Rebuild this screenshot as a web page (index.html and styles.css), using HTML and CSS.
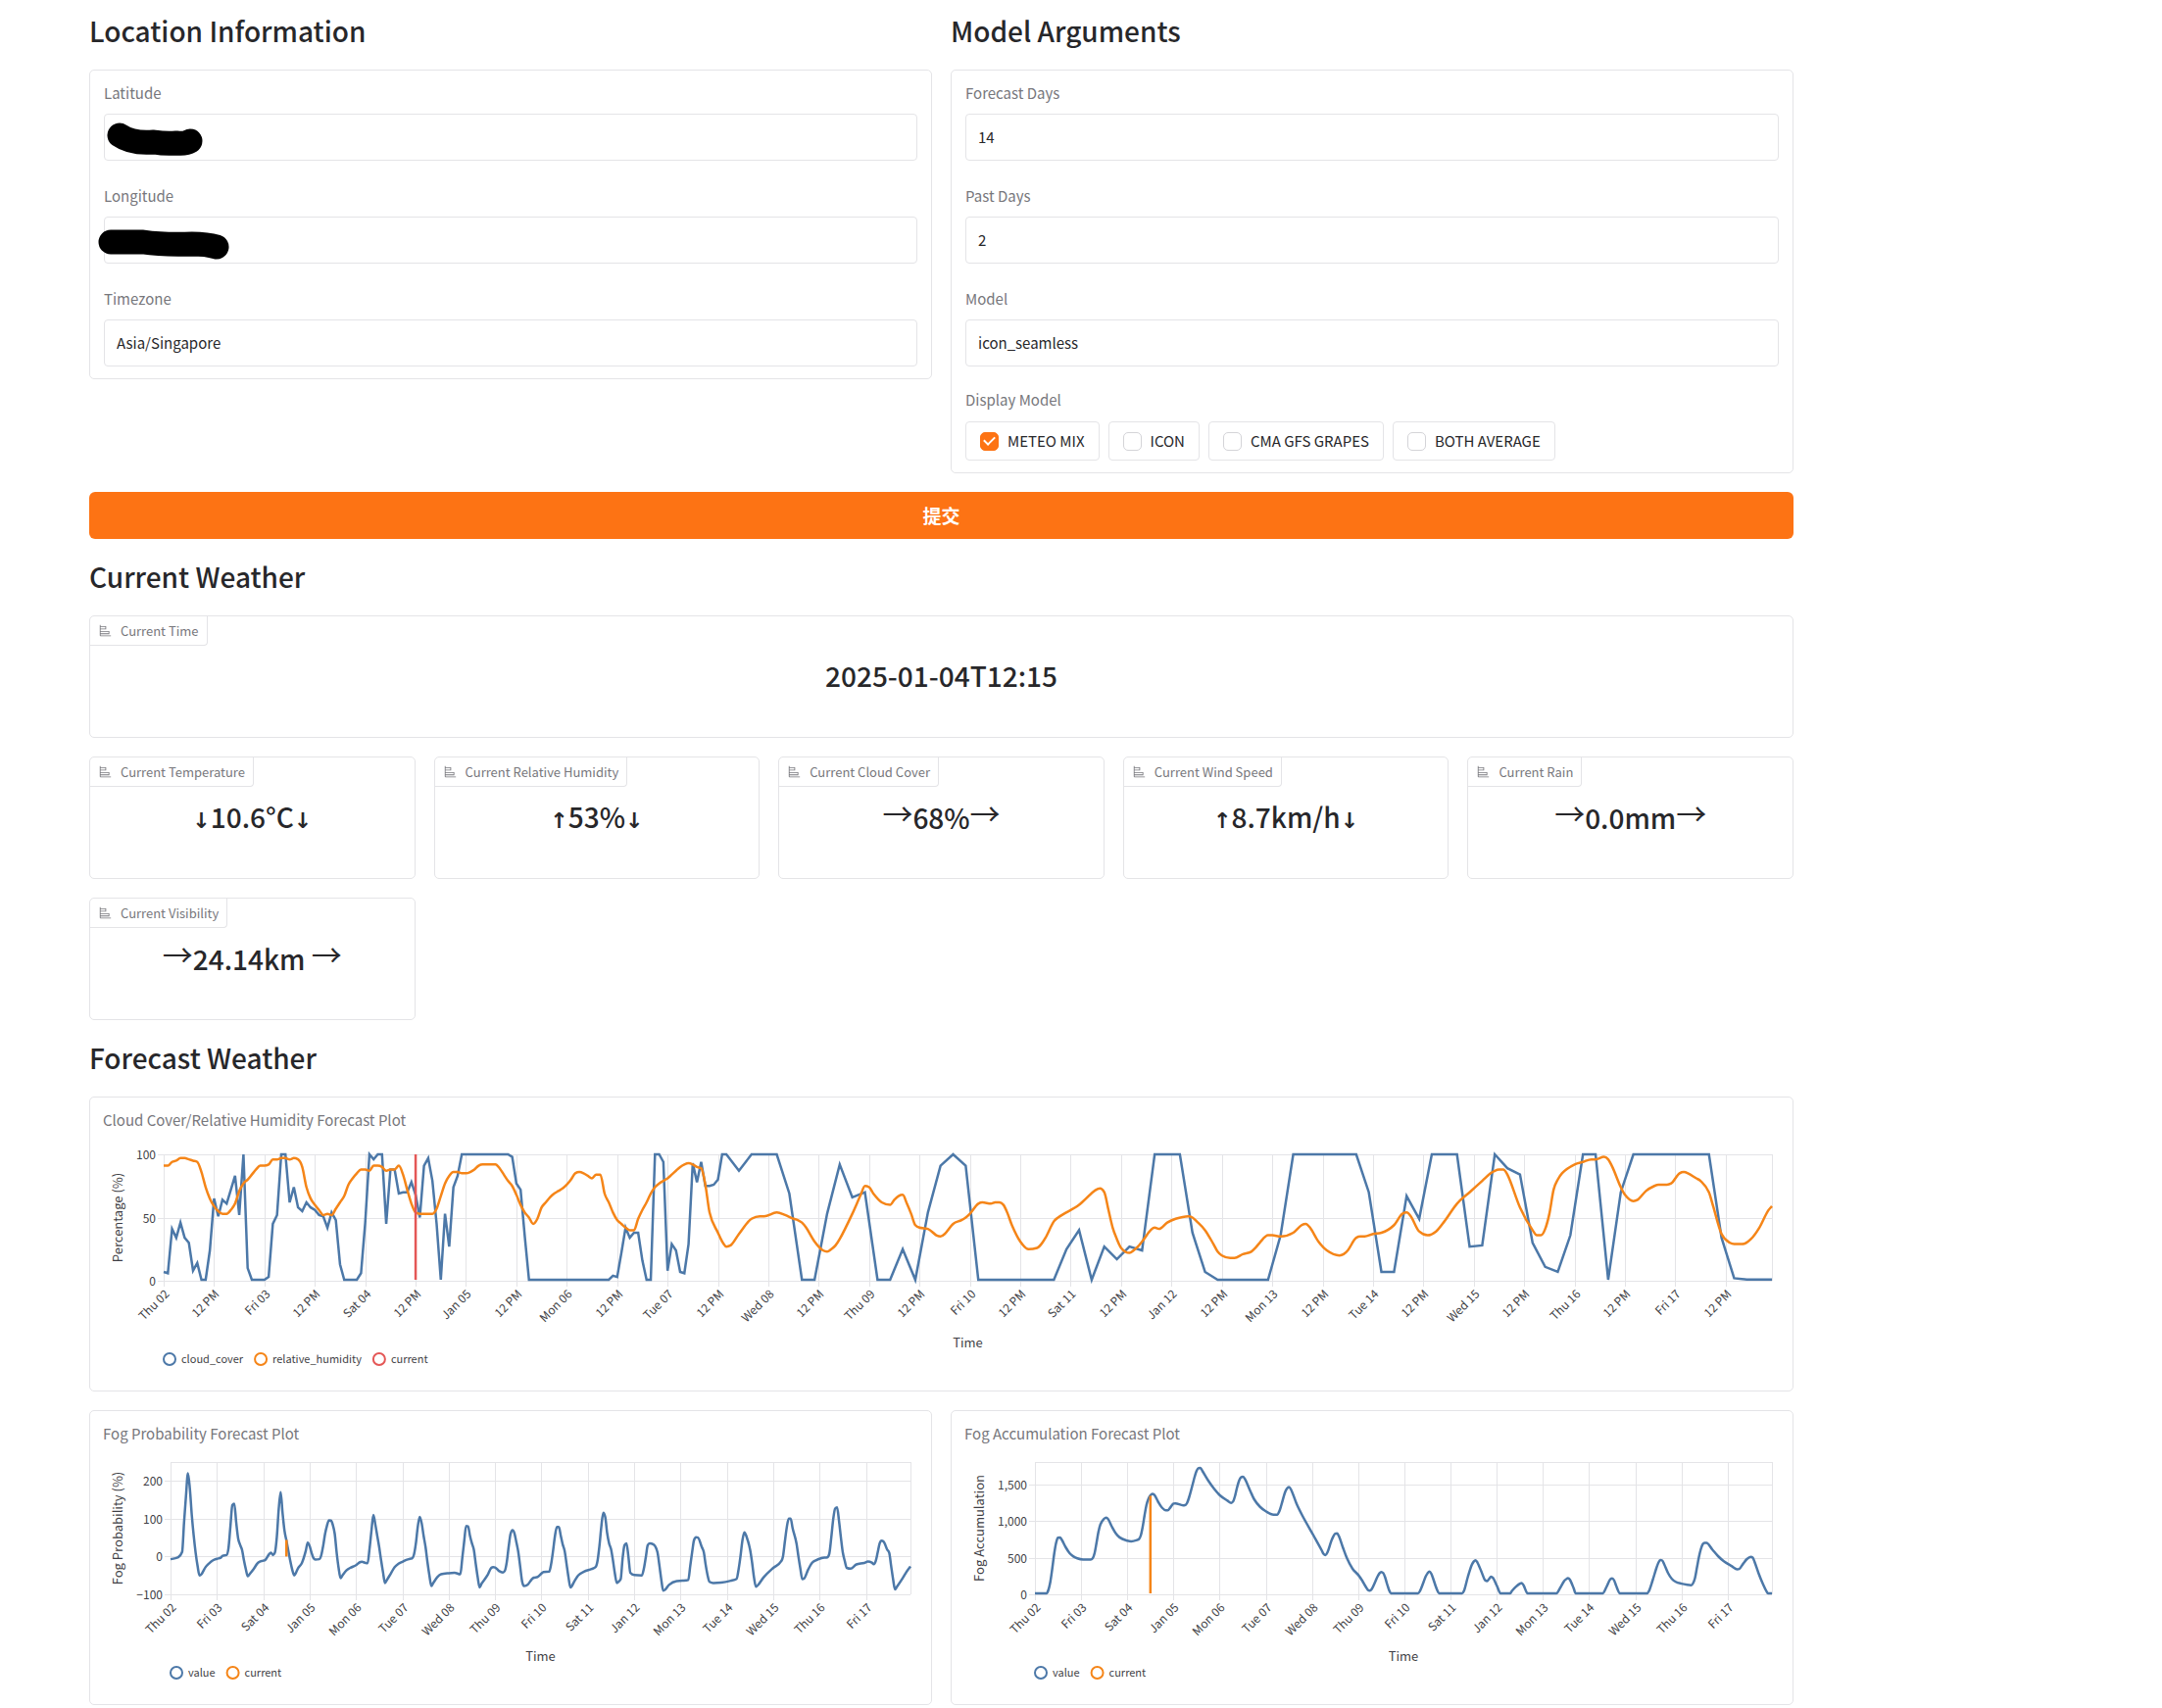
FILE: index.html
```html
<!DOCTYPE html>
<html lang="en">
<head>
<meta charset="utf-8">
<title>Weather Forecast</title>
<link rel="stylesheet" href="styles.css">
</head>
<body>
<svg width="0" height="0" class="sprite" aria-hidden="true">
  <symbol id="bar-icon" viewBox="0 0 32 32"><path fill="currentColor" d="M4 2H2v26a2 2 0 0 0 2 2h26v-2H4v-3h22v-8H4v-4h14V5H4Zm20 17v4H4v-4ZM16 7v4H4V7Z"/></symbol>
</svg>
<main class="page">
  <div class="columns">
    <section class="column">
      <h2 class="heading">Location Information</h2>
      <div class="card form">
        <div class="field">
          <label for="latitude">Latitude</label>
          <div class="control">
            <input id="latitude" type="text">
            <svg class="redaction" width="130" height="48" aria-hidden="true"><path d="M16 22Q29 31 51 29Q63 31 74 30Q83 31 88 28"/></svg>
          </div>
        </div>
        <div class="field">
          <label for="longitude">Longitude</label>
          <div class="control">
            <input id="longitude" type="text">
            <svg class="redaction" width="130" height="48" aria-hidden="true"><path d="M7 26L40 26Q60 29 90 28Q105 28 115 31"/></svg>
          </div>
        </div>
        <div class="field">
          <label for="timezone">Timezone</label>
          <div class="control"><input id="timezone" type="text" value="Asia/Singapore"></div>
        </div>
      </div>
    </section>
    <section class="column">
      <h2 class="heading">Model Arguments</h2>
      <div class="card form">
        <div class="field">
          <label for="forecast-days">Forecast Days</label>
          <div class="control"><input id="forecast-days" type="text" value="14"></div>
        </div>
        <div class="field">
          <label for="past-days">Past Days</label>
          <div class="control"><input id="past-days" type="text" value="2"></div>
        </div>
        <div class="field">
          <label for="model">Model</label>
          <div class="control"><input id="model" type="text" value="icon_seamless"></div>
        </div>
        <fieldset class="choices">
          <legend>Display Model</legend>
          <div class="choice-list">
            <label class="choice"><input type="checkbox" checked>METEO MIX</label>
            <label class="choice"><input type="checkbox">ICON</label>
            <label class="choice"><input type="checkbox">CMA GFS GRAPES</label>
            <label class="choice"><input type="checkbox">BOTH AVERAGE</label>
          </div>
        </fieldset>
      </div>
    </section>
  </div>

  <button class="submit" type="submit" lang="zh">提交</button>

  <h2 class="heading">Current Weather</h2>
  <article class="card stat">
    <h3 class="tab"><svg class="icon"><use href="#bar-icon"/></svg>Current Time</h3>
    <p class="value">2025-01-04T12:15</p>
  </article>
  <div class="stats">
    <article class="card stat">
      <h3 class="tab"><svg class="icon"><use href="#bar-icon"/></svg>Current Temperature</h3>
      <p class="value"><span class="rise">↓</span>10.6°C<span class="rise">↓</span></p>
    </article>
    <article class="card stat">
      <h3 class="tab"><svg class="icon"><use href="#bar-icon"/></svg>Current Relative Humidity</h3>
      <p class="value"><span class="rise">↑</span>53%<span class="rise">↓</span></p>
    </article>
    <article class="card stat">
      <h3 class="tab"><svg class="icon"><use href="#bar-icon"/></svg>Current Cloud Cover</h3>
      <p class="value"><span class="steady">→</span>68%<span class="steady">→</span></p>
    </article>
    <article class="card stat">
      <h3 class="tab"><svg class="icon"><use href="#bar-icon"/></svg>Current Wind Speed</h3>
      <p class="value"><span class="rise">↑</span>8.7km/h<span class="rise">↓</span></p>
    </article>
    <article class="card stat">
      <h3 class="tab"><svg class="icon"><use href="#bar-icon"/></svg>Current Rain</h3>
      <p class="value"><span class="steady">→</span>0.0mm<span class="steady">→</span></p>
    </article>
    <article class="card stat">
      <h3 class="tab"><svg class="icon"><use href="#bar-icon"/></svg>Current Visibility</h3>
      <p class="value"><span class="steady">→</span>24.14km <span class="steady">→</span></p>
    </article>
  </div>

  <h2 class="heading">Forecast Weather</h2>
  <article class="card plot">
    <h3 class="plot-title">Cloud Cover/Relative Humidity Forecast Plot</h3>
    <svg class="chart" id="cloud-chart"></svg>
  </article>
  <div class="columns">
    <article class="card plot">
      <h3 class="plot-title">Fog Probability Forecast Plot</h3>
      <svg class="chart" id="probability-chart"></svg>
    </article>
    <article class="card plot">
      <h3 class="plot-title">Fog Accumulation Forecast Plot</h3>
      <svg class="chart" id="accumulation-chart"></svg>
    </article>
  </div>
</main>
<script src="charts.js"></script>
</body>
</html>
```

FILE: styles.css
```css
* { box-sizing: border-box; }

body {
  margin: 0;
  background: #fff;
  color: #27272a;
  font-family: "Noto Sans CJK SC", "Noto Sans", sans-serif;
  font-size: 15px;
  line-height: 24px;
}

h2, h3, p { margin: 0; }

.sprite { position: absolute; }

.page {
  display: flex;
  flex-direction: column;
  gap: 19px;
  padding: 12px 376px 3px 91px;
}

.heading {
  height: 40px;
  font-size: 28px;
  font-weight: 500;
  line-height: 38px;
}

.columns {
  display: grid;
  grid-template-columns: 1fr 1fr;
  gap: 19px;
  align-items: start;
}

.column {
  display: flex;
  flex-direction: column;
  gap: 19px;
}

.card {
  border: 1px solid #e4e4e7;
  border-radius: 5px;
  background: #fff;
  min-width: 0;
}

/* Forms */

.form { padding: 11px 14px 12px; }

.field + .field { margin-top: 24px; }

.field > label,
.choices legend {
  display: block;
  padding: 0;
  color: #77777c;
}

.control {
  position: relative;
  margin-top: 9px;
}

.control input {
  display: block;
  width: 100%;
  height: 48px;
  padding: 0 12px 1px;
  border: 1px solid #e4e4e7;
  border-radius: 4px;
  background: #fff;
  color: #27272a;
  font: inherit;
}

.redaction {
  position: absolute;
  top: 0;
  left: 0;
  overflow: visible;
  pointer-events: none;
}

.redaction path {
  fill: none;
  stroke: #000;
  stroke-width: 25;
  stroke-linecap: round;
  stroke-linejoin: round;
}

.choices {
  margin: 22px 0 0;
  padding: 0;
  border: 0;
  min-width: 0;
}

.choice-list {
  display: flex;
  flex-wrap: wrap;
  gap: 9px;
  margin-top: 10px;
}

.choice {
  display: flex;
  align-items: center;
  gap: 9px;
  height: 40px;
  padding: 0 14px;
  border: 1px solid #e4e4e7;
  border-radius: 4px;
}

.choice input {
  appearance: none;
  display: grid;
  place-items: center;
  width: 19px;
  height: 19px;
  margin: 0;
  border: 1px solid #d4d4d8;
  border-radius: 5px;
  background: #fff;
}

.choice input:checked {
  border-color: #fd7314;
  background: #fd7314;
}

.choice input:checked::after {
  content: "";
  width: 5px;
  height: 9px;
  margin-bottom: 3px;
  border: solid #fff;
  border-width: 0 2px 2px 0;
  transform: rotate(45deg);
}

.submit {
  height: 48px;
  border: 0;
  border-radius: 6px;
  background: #fd7314;
  color: #fff;
  font: inherit;
  font-size: 19px;
  font-weight: 700;
}

/* Current weather */

.stats {
  display: grid;
  grid-template-columns: repeat(5, 1fr);
  gap: 19px;
}

.stat {
  display: flex;
  flex-direction: column;
  height: 125px;
}

.tab {
  display: flex;
  align-items: center;
  align-self: flex-start;
  gap: 9px;
  height: 30px;
  padding: 0 8px 0 9px;
  border: solid #e4e4e7;
  border-width: 0 1px 1px 0;
  border-bottom-right-radius: 4px;
  color: #77777c;
  font-size: 13px;
  font-weight: 400;
}

.icon {
  width: 13px;
  height: 13px;
}

.value {
  padding-top: 10px;
  font-size: 28px;
  font-weight: 500;
  line-height: 40px;
  text-align: center;
}

.rise,
.steady { line-height: 1; }

.rise {
  font-family: "DejaVu Sans", sans-serif;
  font-size: 22px;
  font-weight: 700;
}

.steady {
  font-size: 31px;
  font-weight: 400;
  vertical-align: 4px;
}

/* Forecast plots */

.plot {
  height: 301px;
  padding: 11px 13px;
}

.plot-title {
  color: #77777c;
  font-size: 15px;
  font-weight: 400;
}

.chart {
  display: block;
  width: 100%;
  height: 240px;
  margin-top: 11px;
  font-size: 12px;
  overflow: visible;
}

.chart text { fill: #3f3f46; }
.chart .axis-title { font-size: 13px; }
.chart .key-text { font-size: 11px; }
.chart .grid { stroke: #e4e4e7; stroke-width: 1; shape-rendering: crispEdges; }
.chart .line { fill: none; stroke-width: 2.5; }
.chart .key { fill: none; stroke-width: 2; }
```

FILE: charts.js
```js
const BLUE = '#4c78a8', ORANGE = '#f58518', RED = '#e45756';
const LAST_HOUR = 383;
const DAYS = ['Thu 02', 'Fri 03', 'Sat 04', 'Jan 05', 'Mon 06', 'Tue 07', 'Wed 08', 'Thu 09',
  'Fri 10', 'Sat 11', 'Jan 12', 'Mon 13', 'Tue 14', 'Wed 15', 'Thu 16', 'Fri 17'];

// Series are written as "hour:value" pairs, hours counted from Thu 02 midnight.
const cloudCover = `0:7 1:6 2:41 3:34 4:46 5:34 6:30 7:8 8:14 9:0 10:0 11:24 12:65 13:51 14:64 15:61 16:72 17:83
18:52 19:100 20:10 21:0 24:0 25:3 26:45 27:52 28:100 29:100 30:62 31:74 32:58 33:55 34:62 35:58 36:56 37:52 38:51
39:42 40:54 41:48 42:13 43:0 46:0 47:6 48:46 49:100 50:96 51:100 52:100 53:45 54:88 55:88 56:69 57:70 58:70 59:78
60:68 61:50 62:91 63:97 64:79 65:45 66:0 67:53 68:27 69:74 70:83 71:100 82:100 83:98 84:77 85:72 86:35 87:0 106:0
107:4 108:3 109:22 110:42 111:34 112:38 113:38 114:16 115:0 116:0 117:100 118:100 119:94 120:8 121:29 122:24 123:7
124:6 125:29 126:93 127:78 128:94 129:75 130:75 131:76 132:80 133:100 134:100 137:87 140:100 146:100 149:69 152:0
155:0 158:53 161:92 164:66 167:70 170:0 173:0 176:25 179:0 182:54 185:91 188:100 191:91 194:0 212:0 215:25 218:40
221:0 224:27 227:17 230:27 233:24 236:100 242:100 245:38 248:7 251:0 263:0 266:36 269:100 284:100 287:70 290:7 293:7
296:67 299:49 302:100 308:100 311:27 314:28 317:100 320:89 323:84 326:30 329:11 332:7 335:36 338:100 341:100 344:0
347:70 350:100 368:100 371:34 374:2 377:1 383:1`;

const humidity = `0:91 1:91 2:94 3:95 4:97 5:97 6:96 7:95 8:94 9:86 10:74 11:65 12:59 13:55 14:53 15:53 16:56 17:61
18:71 19:77 20:80 21:84 22:88 23:91 24:91 25:92 26:96 27:96 28:97 29:97 30:96 31:97 32:96 33:90 34:74 35:65 36:60
37:56 38:52 39:53 40:52 41:57 42:62 43:67 44:76 45:81 46:85 47:88 48:88 49:87 50:91 51:91 52:90 53:87 54:88 55:88
56:91 57:84 58:72 59:61 60:54 61:53 64:53 65:57 66:67 67:77 68:83 69:86 70:86 71:85 72:85 73:86 74:88 75:91 76:92
79:92 80:89 81:84 82:79 83:75 84:68 85:60 86:54 87:50 88:45 89:49 90:58 91:62 92:66 93:69 94:71 95:73 96:76 97:80
98:85 99:86 100:85 101:83 102:81 103:84 104:84 105:69 106:62 107:54 108:48 109:45 110:42 111:40 112:40 113:49
114:56 115:62 116:69 117:74 118:77 119:79 120:81 121:84 122:87 123:90 124:92 125:93 126:92 127:90 128:89 129:76
130:54 132:38 133:31 134:27 135:28 137:37 140:49 142:51 143:51 146:54 148:52 150:49 151:48 152:46 153:42 155:31
157:24 158:23 159:25 160:28 161:33 164:53 166:68 167:75 168:74 169:69 171:62 173:60 174:64 175:67 176:68 177:61
178:53 179:44 180:42 182:41 184:36 185:35 186:37 188:45 190:48 191:50 192:53 194:61 195:62 197:61 198:62 199:62
200:60 201:53 202:44 204:31 206:25 208:26 209:29 210:34 212:47 213:50 218:60 219:63 223:73 224:70 225:56 226:42
227:33 228:26 230:22 231:24 232:27 233:31 236:42 237:41 239:46 241:49 244:51 245:50 246:47 248:40 250:29 251:23
252:20 254:18 255:18 257:21 259:23 260:26 261:30 263:36 264:36 266:35 269:38 271:44 272:45 273:42 275:31 277:24
280:20 281:21 282:24 284:34 285:35 286:35 288:37 290:38 293:44 295:53 296:54 297:51 299:39 301:36 303:39 305:47
308:61 311:70 314:79 316:85 317:87 318:88 319:88 320:84 323:58 326:40 327:36 328:36 329:41 330:53 331:72 332:80
333:85 336:92 338:94 340:96 341:96 343:98 344:96 345:90 347:74 348:68 350:63 351:64 353:71 355:75 356:76 358:76
359:77 361:85 362:86 363:85 365:81 366:79 368:70 369:59 371:37 373:30 374:29 376:29 378:33 380:42 382:55 383:59`;

const fogProbability = `0:-7 2:-5 4:-2 6:12 7:90 8:160 9:220 10:180 11:110 12:55 13:10 14:-25 15:-50 16:-47 17:-38
18:-29 20:-18 22:-10 24:-6 26:-3 27:2 29:4 30:22 31:80 32:136 33:140 34:90 35:48 36:31 37:18 38:-10 39:-34 40:-52
41:-46 43:-33 45:-18 46:-14 48:-11 49:-9 51:6 52:10 53:4 54:10 55:50 56:125 57:170 58:115 59:68 60:42 61:15 62:-12
63:-35 64:-50 65:-42 66:-31 68:-17 70:15 71:37 72:28 73:10 74:-4 75:-8 77:-7 78:3 79:28 80:60 81:82 82:96 83:95
84:84 85:60 86:10 87:-30 88:-57 89:-50 91:-37 93:-30 96:-23 98:-15 99:-14 101:-17 102:-18 103:20 104:68 105:110
106:85 107:55 108:25 109:-10 110:-42 111:-70 112:-62 114:-45 116:-28 118:-19 120:-14 122:-9 124:-6 125:-5 126:5
127:35 128:80 129:105 130:88 131:55 132:25 133:-15 134:-50 135:-78 136:-70 138:-55 140:-47 144:-44 147:-43 150:-47
151:-5 152:40 153:81 154:80 155:55 156:35 157:18 158:-20 159:-55 160:-82 161:-72 164:-50 166:-30 167:-28 168:-29
170:-38 172:-42 173:-38 174:-16 175:25 176:60 177:70 178:62 179:38 180:12 181:-27 182:-66 183:-78 184:-77 185:-74
187:-60 188:-56 190:-54 192:-45 193:-41 196:-40 197:-20 198:15 199:55 200:78 201:78 202:55 203:32 204:15 205:-20
206:-55 207:-82 209:-66 211:-50 214:-40 218:-33 220:-28 221:-12 222:28 223:80 224:116 225:105 226:62 227:35 228:20
229:-10 230:-45 231:-70 232:-66 233:-60 234:-5 235:30 236:35 237:0 238:-43 240:-49 244:-50 245:-32 246:-2 247:30
248:35 250:32 252:12 253:-22 254:-60 255:-90 256:-88 258:-75 262:-65 265:-64 268:-62 269:-25 270:12 271:44 272:51
273:50 275:25 276:12 277:-22 278:-50 279:-67 281:-70 285:-69 290:-64 293:-59 294:-35 295:0 296:42 297:64 298:55
300:18 301:-15 302:-55 303:-80 304:-76 307:-55 312:-30 316:-13 317:0 318:40 319:78 320:100 321:100 322:75 324:35
325:0 326:-32 327:-60 328:-58 330:-35 332:-17 334:-10 337:-4 340:-2 341:8 342:50 343:98 344:127 345:130 346:95
347:50 348:10 349:-12 350:-30 352:-32 355:-21 359:-17 361:-13 363:-16 364:-20 365:-12 366:10 367:34 368:42 369:40
371:18 372:10 373:-25 374:-60 375:-87 376:-80 379:-57 381:-40 383:-26`;

const fogAccumulation = `0:12 6:12 7:60 8:170 9:350 10:550 11:700 12:770 13:775 14:740 16:640 18:560 20:515 22:490
25:475 29:475 30:490 31:560 32:700 33:850 34:950 36:1030 37:1045 38:1025 40:920 42:830 44:775 48:730 50:720 53:738
54:750 55:800 56:920 57:1080 58:1220 59:1300 60:1345 61:1368 62:1355 64:1260 66:1180 68:1145 69:1145 71:1205
72:1235 73:1238 77:1210 78:1212 79:1240 80:1310 82:1500 83:1600 84:1680 85:1718 86:1720 87:1680 90:1550 93:1440
96:1350 100:1275 102:1245 103:1265 104:1340 105:1450 106:1540 107:1590 108:1600 109:1575 112:1400 114:1290
117:1190 120:1130 124:1085 126:1085 127:1130 128:1210 130:1390 131:1440 132:1460 133:1430 136:1230 139:1070
145:790 149:600 150:550 151:535 152:570 154:725 155:785 156:825 157:830 158:790 160:640 162:500 165:350 168:265
170:190 172:100 173:60 174:50 175:70 177:180 178:240 179:285 180:305 181:290 182:230 183:140 184:60 185:12 199:12
200:40 202:170 203:240 204:285 205:310 206:280 207:210 208:130 209:60 210:12 222:12 223:50 225:240 227:400 228:445
229:465 230:430 232:310 234:190 235:180 236:210 237:240 238:225 240:120 242:12 247:12 248:50 250:105 252:145
253:155 254:120 256:12 271:12 273:90 275:180 276:205 277:220 278:200 280:80 281:12 295:12 297:100 299:205 300:218
301:190 302:120 304:12 318:12 319:40 321:190 323:360 324:430 325:467 326:460 327:410 329:290 331:210 333:170
336:145 339:130 341:125 342:150 343:220 344:360 345:500 346:610 347:680 348:700 349:700 352:610 355:520 358:450
362:385 365:340 366:345 368:415 370:480 372:510 373:500 374:440 376:290 378:160 380:50 381:12 383:12`;

const charts = [
  { id: 'cloud-chart', left: 62, top: 12, min: 0, max: 100, ticks: [[0, '0'], [50, '50'], [100, '100']],
    halfDays: true, title: 'Percentage (%)', series: [
      { name: 'cloud_cover', color: BLUE, data: cloudCover, straight: true },
      { name: 'relative_humidity', color: ORANGE, data: humidity },
      { name: 'current', color: RED, data: '60:0 60:100' }] },
  { id: 'probability-chart', left: 69, top: 6, min: -100, max: 250,
    ticks: [[-100, '−100'], [0, '0'], [100, '100'], [200, '200']], title: 'Fog Probability (%)', series: [
      { name: 'value', color: BLUE, data: fogProbability },
      { name: 'current', color: ORANGE, data: '60:0 60:44' }] },
  { id: 'accumulation-chart', left: 72, top: 6, min: 0, max: 1800,
    ticks: [[0, '0'], [500, '500'], [1000, '1,000'], [1500, '1,500']], title: 'Fog Accumulation', series: [
      { name: 'value', color: BLUE, data: fogAccumulation },
      { name: 'current', color: ORANGE, data: '60:0 60:1340' }] }
];

function add(parent, tag, attributes, text) {
  const node = document.createElementNS('http://www.w3.org/2000/svg', tag);
  for (const key in attributes) node.setAttribute(key, attributes[key]);
  if (text) node.textContent = text;
  parent.appendChild(node);
  return node;
}

const polyline = p => 'M' + p.map(q => q.join(' ')).join('L');

// Monotone cubic interpolation, so curves never overshoot their samples.
function curve(p) {
  const n = p.length;
  if (n < 3) return polyline(p);
  const slope = [], tangent = [];
  for (let i = 0; i < n - 1; i++) slope.push((p[i + 1][1] - p[i][1]) / (p[i + 1][0] - p[i][0]));
  for (let i = 0; i < n; i++) {
    const a = slope[Math.max(0, i - 1)], b = slope[Math.min(n - 2, i)];
    tangent.push(a * b <= 0 ? 0 : Math.sign(a) * Math.min(Math.abs(a), Math.abs(b), Math.abs(a + b) / 4) * 2);
  }
  let d = 'M' + p[0].join(' ');
  for (let i = 0; i < n - 1; i++) {
    const h = (p[i + 1][0] - p[i][0]) / 3;
    d += `C${p[i][0] + h} ${p[i][1] + tangent[i] * h} ${p[i + 1][0] - h} ${p[i + 1][1] - tangent[i + 1] * h} ${p[i + 1][0]} ${p[i + 1][1]}`;
  }
  return d;
}

function draw(chart) {
  const svg = document.getElementById(chart.id);
  svg.textContent = '';
  const { left, top } = chart, right = svg.clientWidth - 8, bottom = 141;
  const x = hour => left + (right - left) * hour / LAST_HOUR;
  const y = value => bottom - (bottom - top) * (value - chart.min) / (chart.max - chart.min);

  for (let hour = 0; hour < LAST_HOUR; hour += chart.halfDays ? 12 : 24) {
    const px = Math.round(x(hour));
    add(svg, 'line', { class: 'grid', x1: px, x2: px, y1: top, y2: bottom + 6 });
    add(svg, 'text', { transform: `translate(${px} ${bottom + 8}) rotate(-45)`, dy: 9, 'text-anchor': 'end' },
      hour % 24 ? '12 PM' : DAYS[hour / 24]);
  }
  for (const [value, label] of chart.ticks) {
    const py = Math.round(y(value));
    add(svg, 'line', { class: 'grid', x1: left - 6, x2: right, y1: py, y2: py });
    add(svg, 'text', { x: left - 8, y: py + 5, 'text-anchor': 'end' }, label);
  }
  add(svg, 'line', { class: 'grid', x1: left, x2: right, y1: top, y2: top });
  add(svg, 'line', { class: 'grid', x1: right, x2: right, y1: top, y2: bottom });

  for (const s of chart.series) {
    const points = s.data.split(/\s+/).map(pair => pair.split(':').map(Number))
      .map(([hour, value]) => [x(hour), Math.min(y(value), bottom - 1)]);
    add(svg, 'path', { class: 'line', stroke: s.color, d: s.straight ? polyline(points) : curve(points) });
  }

  add(svg, 'text', { class: 'axis-title', x: (left + right) / 2, y: 209, 'text-anchor': 'middle' }, 'Time');
  add(svg, 'text', { class: 'axis-title', transform: `translate(20 ${(top + bottom) / 2}) rotate(-90)`, 'text-anchor': 'middle' }, chart.title);

  let keyX = left + 6;
  for (const s of chart.series) {
    add(svg, 'circle', { class: 'key', stroke: s.color, cx: keyX, cy: 221, r: 6 });
    const text = add(svg, 'text', { class: 'key-text', x: keyX + 12, y: 225 }, s.name);
    keyX += 12 + text.getComputedTextLength() + 18;
  }
}

const drawAll = () => charts.forEach(draw);
drawAll();
addEventListener('resize', drawAll);
```
